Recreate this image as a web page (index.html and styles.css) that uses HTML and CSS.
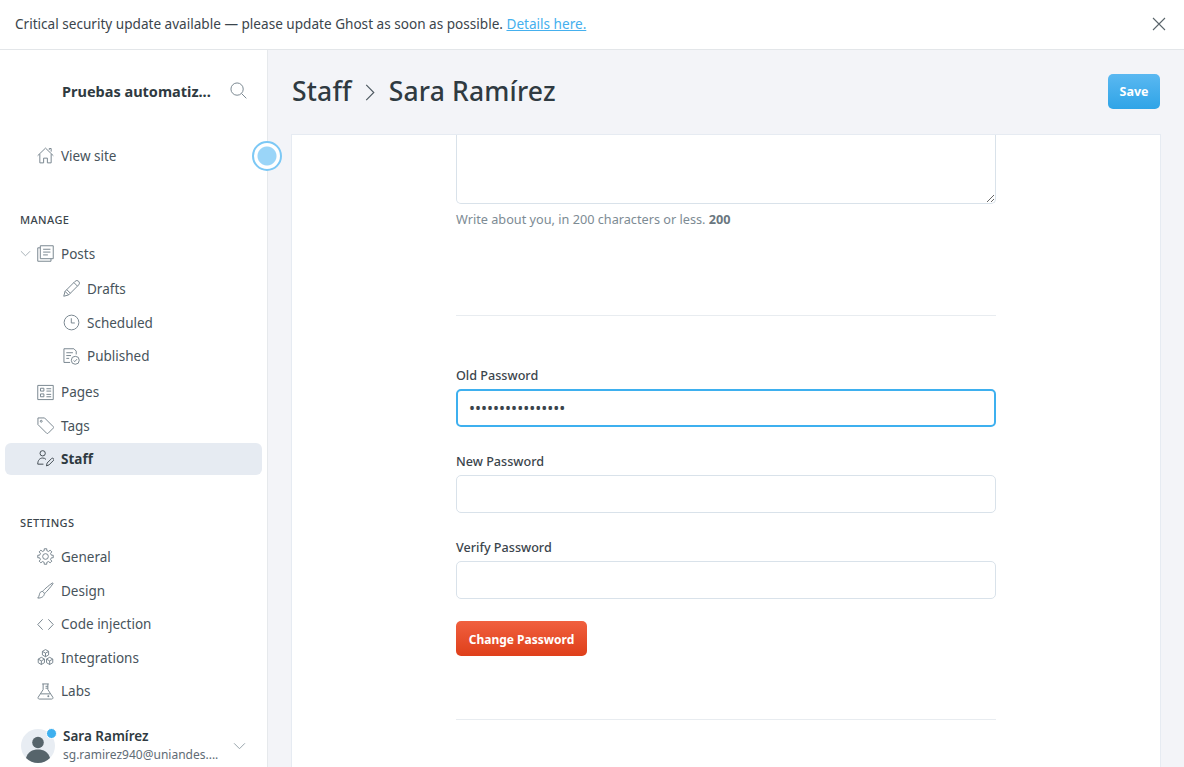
FILE: index.html

```html
<!DOCTYPE html>
<html lang="es">
<head>
    <meta charset="UTF-8">
    <title>Staff - Sara Ramírez</title>
    <link rel="stylesheet" href="styles.css">
</head>
<body>
    <div class="banner">
        <p>Critical security update available — please update Ghost as soon as possible. <a href="#">Details here.</a></p>
        <svg class="banner-close" viewBox="0 0 14 14"><path d="M1 1l12 12M13 1L1 13"/></svg>
    </div>

    <div class="app">
        <aside class="sidebar">
            <div class="site-head">
                <strong>Pruebas automatiz...</strong>
                <svg class="icon search-icon" viewBox="0 0 18 18"><circle cx="7.500" cy="7.500" r="6.500"/><path d="M12.300 12.300l5 5"/></svg>
            </div>

            <nav class="nav view-site">
                <a class="nav-item" href="#">
                    <svg class="icon" viewBox="0 0 18 18"><path d="M.7 9.200L9 1.200l8.300 8M3 7.500v9.300h4v-5h4v5h4V7.500M13 3V1.600h2v3.300"/></svg>
                    View site
                </a>
            </nav>
            <span class="pulse"></span>

            <h4 class="nav-title manage">Manage</h4>
            <nav class="nav">
                <a class="nav-item" href="#">
                    <svg class="caret" viewBox="0 0 12 7"><path d="M1 1l5 5 5-5"/></svg>
                    <svg class="icon" viewBox="0 0 18 18"><path d="M3.500 14.500V.8h13.700v13.700zM3.500 3H.8v14.200h14V14.500M6.500 4.500h7.700M6.500 7.500h7.700M6.500 10.500h5"/></svg>
                    Posts
                </a>
                <a class="nav-item sub first-sub" href="#">
                    <svg class="icon" viewBox="0 0 18 18"><path d="M.8 17.200l1.400-5.200L12.800 1.400a2 2 0 0 1 3.800 3.800L6 15.800zM2.200 12l3.800 3.800M4 10.200l3.800 3.800M11.500 2.700l3.800 3.800"/></svg>
                    Drafts
                </a>
                <a class="nav-item sub" href="#">
                    <svg class="icon" viewBox="0 0 18 18"><circle cx="9" cy="9" r="7.800"/><path d="M8.800 4.500v5h3.700"/></svg>
                    Scheduled
                </a>
                <a class="nav-item sub" href="#">
                    <svg class="icon" viewBox="0 0 18 18"><path d="M7.500 15.300H1V.8h10.500l2.500 2.500v3.500M3.500 5h7M3.500 8h5M3.500 11h3"/><circle cx="13" cy="13" r="4.200"/><path d="M11.200 13.200l1.300 1.200 2.300-2.600"/></svg>
                    Published
                </a>
                <a class="nav-item after-sub" href="#">
                    <svg class="icon" viewBox="0 0 18 18"><path d="M.8 1.500h16.400v15H.8zM3.700 4.500h3.600v3H3.700zM3.700 10.500h3.600v3H3.700zM10 5h5M10 7.500h5M10 11h5M10 13.500h5"/></svg>
                    Pages
                </a>
                <a class="nav-item" href="#">
                    <svg class="icon" viewBox="0 0 18 18"><path d="M1 1h7l9.300 9.300a1 1 0 0 1 0 1.400l-5.600 5.600a1 1 0 0 1-1.400 0L1 8z"/><circle cx="4.500" cy="4.500" r="1"/></svg>
                    Tags
                </a>
                <a class="nav-item active" href="#">
                    <svg class="icon" viewBox="0 0 18 18"><circle cx="6" cy="3.500" r="2.800"/><path d="M.8 15c0-4 2-6.500 5.200-6.500 1.500 0 2.700.5 3.500 1.500M.8 15h6M10 16.800l.7-3 5-5a1.500 1.500 0 0 1 2 2l-5 5z"/></svg>
                    Staff
                </a>
            </nav>

            <h4 class="nav-title settings">Settings</h4>
            <nav class="nav">
                <a class="nav-item" href="#">
                    <svg class="icon" viewBox="0 0 18 18"><circle cx="9" cy="9" r="3"/><path d="M7.580 2.860L7.700.8h2.600l.12 2.060 1.920.8 1.540-1.380 1.840 1.840-1.380 1.540.8 1.920 2.060.12v2.600l-2.060.12-.8 1.920 1.380 1.540-1.840 1.840-1.540-1.380-1.920.8-.12 2.060H7.700l-.12-2.060-1.920-.8-1.540 1.380-1.840-1.840 1.380-1.540-.8-1.920-2.060-.12V7.700l2.060-.12.8-1.920-1.380-1.540 1.840-1.840 1.540 1.380z"/></svg>
                    General
                </a>
                <a class="nav-item" href="#">
                    <svg class="icon" viewBox="0 0 18 18"><path d="M16.500 1c-.6 0-9.500 7-10.500 9l2 2c2-1 9-9.900 9-10.500 0-.3-.2-.5-.5-.5zM6 10c-2.500 0-3.200 1.500-3.500 3.500-.2 1.300-.8 2.300-1.700 3.500 3.500.2 7-1.500 7-5"/></svg>
                    Design
                </a>
                <a class="nav-item" href="#">
                    <svg class="icon" viewBox="0 0 18 18"><path d="M6 3.500L.8 9 6 14.500M12 3.500L17.200 9 12 14.500"/></svg>
                    Code injection
                </a>
                <a class="nav-item" href="#">
                    <svg class="icon" viewBox="0 0 18 18"><path d="M9 .6l3.300 1.900v3.800L9 8.200 5.700 6.300V2.500zM5.700 2.500L9 4.400l3.300-1.900M9 4.400v3.800"/><path d="M4.600 8.800l3.300 1.900v3.800l-3.300 1.900-3.300-1.900v-3.800zM1.300 10.700l3.300 1.900 3.300-1.900M4.600 12.600v4"/><path d="M13.400 8.800l3.300 1.900v3.800l-3.300 1.900-3.300-1.900v-3.800zM10.100 10.700l3.300 1.900 3.300-1.900M13.400 12.600v4"/></svg>
                    Integrations
                </a>
                <a class="nav-item" href="#">
                    <svg class="icon" viewBox="0 0 18 18"><path d="M5.500 1h7M6.500 1v6L1.300 15a1.300 1.300 0 0 0 1.100 2h13.200a1.300 1.300 0 0 0 1.100-2L11.500 7V1M9 3.500h2.500M9 5.500h2.500M4 11.500h10M7 14h.1M11 14h2M12 13v2"/></svg>
                    Labs
                </a>
            </nav>

            <div class="user">
                <div class="avatar">
                    <svg viewBox="0 0 34 34"><circle cx="17" cy="17" r="17" fill="#e8edf3"/><circle cx="17" cy="13.500" r="5.800" fill="#56646b"/><path d="M5 29c1.500-6 6.500-8.500 12-8.500S27.500 23 29 29a17 17 0 0 1-24 0z" fill="#56646b"/></svg>
                    <span class="avatar-dot"></span>
                </div>
                <div class="user-text">
                    <strong>Sara Ramírez</strong>
                    <span>sg.ramirez940@uniandes....</span>
                </div>
                <svg class="caret user-caret" viewBox="0 0 12 7"><path d="M1 1l5 5 5-5"/></svg>
            </div>
        </aside>

        <main class="main">
            <header class="page-head">
                <h1>Staff <svg class="crumb" viewBox="0 0 10 18"><path d="M1 1l8 8-8 8"/></svg> Sara Ramírez</h1>
                <button class="btn btn-blue">Save</button>
            </header>

            <section class="card">
                <div class="form">
                    <textarea class="bio"></textarea>
                    <p class="hint">Write about you, in 200 characters or less. <b>200</b></p>
                    <hr class="line first-line">

                    <label for="old-pass">Old Password</label>
                    <input class="field focused" type="password" id="old-pass" value="................">

                    <label for="new-pass">New Password</label>
                    <input class="field" type="password" id="new-pass">

                    <label for="verify-pass">Verify Password</label>
                    <input class="field" type="password" id="verify-pass">

                    <button class="btn btn-red">Change Password</button>
                    <hr class="line last-line">
                </div>
            </section>
        </main>
    </div>
</body>
</html>
```

FILE: styles.css

```css
* {
    box-sizing: border-box;
}

html, body {
    height: 100%;
}

body {
    margin: 0;
    overflow: hidden;
    font-family: "Noto Sans", "Open Sans", sans-serif;
    font-size: 13px;
    color: #3b454c;
    background-color: #fff;
}

/* Aviso superior */
.banner {
    height: 50px;
    padding: 0 18px 2px 15px;
    display: flex;
    align-items: center;
    justify-content: space-between;
    border-bottom: 1px solid #e3e6e9;
}

.banner p {
    margin: 0;
    font-size: 13.580px;
}

.banner a {
    color: #45b0ee;
}

.banner-close {
    width: 14px;
    height: 14px;
    fill: none;
    stroke: #59646b;
    stroke-width: 1.1;
}

.app {
    display: flex;
    height: 717px;
}

/* Barra lateral */
.sidebar {
    position: relative;
    width: 268px;
    flex: none;
    border-right: 1px solid #e6e9ec;
    padding: 0 5px;
}

.site-head {
    height: 81px;
    padding: 0 15px 0 57px;
    display: flex;
    align-items: center;
    justify-content: space-between;
    font-size: 14.500px;
    color: #2f3a41;
}

.icon {
    width: 17px;
    height: 17px;
    flex: none;
    fill: none;
    stroke: #74828b;
    stroke-width: 1;
    stroke-linejoin: round;
}

.nav-item {
    height: 33.600px;
    padding-left: 32px;
    display: flex;
    align-items: center;
    gap: 7px;
    font-size: 13.500px;
    color: #47535b;
    text-decoration: none;
    border-radius: 6px;
    position: relative;
}

.view-site {
    margin-top: 8px;
}

.sub {
    padding-left: 58px;
}

.first-sub {
    margin-top: 1.500px;
}

.after-sub {
    margin-top: 2.400px;
}

.active {
    height: 32px;
    background-color: #e6ebf2;
    font-weight: 700;
    color: #2f3a41;
}

.active .icon {
    stroke: #3b454c;
}

.caret {
    fill: none;
    stroke: #95a1a9;
    stroke-width: 0.9;
    width: 11px;
    height: 7px;
}

.nav-item .caret {
    position: absolute;
    left: 15px;
    top: 13px;
}

.nav-title {
    margin: 0;
    padding-left: 15px;
    font-size: 11px;
    font-weight: 500;
    text-transform: uppercase;
    letter-spacing: 0.4px;
    color: #3b454c;
    line-height: 15px;
}

.manage {
    margin-top: 39px;
    margin-bottom: 10.500px;
}

.settings {
    margin-top: 40.600px;
    margin-bottom: 10px;
}

/* Indicador azul */
.pulse {
    position: absolute;
    left: 252px;
    top: 91px;
    width: 30px;
    height: 30px;
    border-radius: 50%;
    border: 2px solid #7cc8f5;
    background-color: #fff;
    background-image: radial-gradient(circle, #9ad5f8 0, #9ad5f8 9px, #fff 10px);
}

/* Usuario */
.user {
    display: flex;
    align-items: center;
    margin-top: 19px;
    padding: 0 16px;
    position: relative;
}

.avatar {
    width: 34px;
    height: 34px;
    position: relative;
    flex: none;
}

.avatar svg {
    display: block;
}

.avatar-dot {
    position: absolute;
    top: -1px;
    right: -2px;
    width: 11px;
    height: 11px;
    border-radius: 50%;
    background-color: #3eb0ef;
    border: 1px solid #fff;
}

.user-text {
    margin-left: 8px;
    display: flex;
    flex-direction: column;
    line-height: 18.500px;
}

.user-text strong {
    font-size: 13.500px;
    font-weight: 600;
    color: #2f3a41;
}

.user-text span {
    font-size: 12px;
    color: #5f6c75;
}

.user-caret {
    margin-left: auto;
    width: 13px;
    height: 8px;
}

/* Contenido */
.main {
    flex: 1;
    min-width: 0;
    background-color: #f3f4f8;
    padding: 0 23px;
}

.page-head {
    height: 84px;
    padding: 0 1px 2px 1px;
    display: flex;
    align-items: center;
    justify-content: space-between;
}

.page-head h1 {
    margin: 0;
    font-size: 26.500px;
    font-weight: 500;
    letter-spacing: 0.17px;
    color: #2f3a41;
}

.crumb {
    width: 10px;
    height: 17px;
    margin: 0 6.500px;
    fill: none;
    stroke: #4d5860;
    stroke-width: 1.2;
}

.btn {
    border: none;
    border-radius: 5px;
    font-family: inherit;
    font-size: 12.500px;
    font-weight: 700;
    color: #fff;
    height: 35px;
}

.btn-blue {
    width: 52px;
    background: linear-gradient(#5ab8f1, #2fa4e7);
}

.btn-red {
    width: 131px;
    font-size: 12px;
    padding-top: 3px;
    background: linear-gradient(#f0603f, #df3f1a);
    display: block;
    margin-top: 22px;
}

.card {
    height: 640px;
    background-color: #fff;
    border: 1px solid #e6ebf2;
    border-bottom: none;
    padding-left: 164px;
}

.form {
    width: 540px;
}

.bio {
    display: block;
    width: 100%;
    height: 69px;
    border: 1px solid #d9e2ea;
    border-top: none;
    border-radius: 0 0 5px 5px;
    outline: none;
    resize: vertical;
}

.hint {
    margin: 7px 0 0;
    font-size: 12.700px;
    line-height: 17px;
    color: #7d8b94;
}

.hint b {
    color: #6a7780;
}

.line {
    margin: 0;
    border: none;
    border-top: 1px solid #e8ecf0;
}

.first-line {
    margin-top: 87px;
    margin-bottom: 51px;
}

.last-line {
    margin-top: 63px;
}

label {
    display: block;
    font-size: 12.600px;
    font-weight: 500;
    line-height: 18px;
    margin-bottom: 4px;
    color: #3b454c;
}

.field {
    display: block;
    width: 100%;
    height: 38px;
    padding: 0 11px;
    margin-bottom: 26px;
    border: 1px solid #d9e2ea;
    border-radius: 5px;
    outline: none;
    font-family: inherit;
    font-size: 16px;
    color: #3b454c;
}

.focused {
    border: 2px solid #3eb0ef;
}

.field:last-of-type {
    margin-bottom: 0;
}
```
